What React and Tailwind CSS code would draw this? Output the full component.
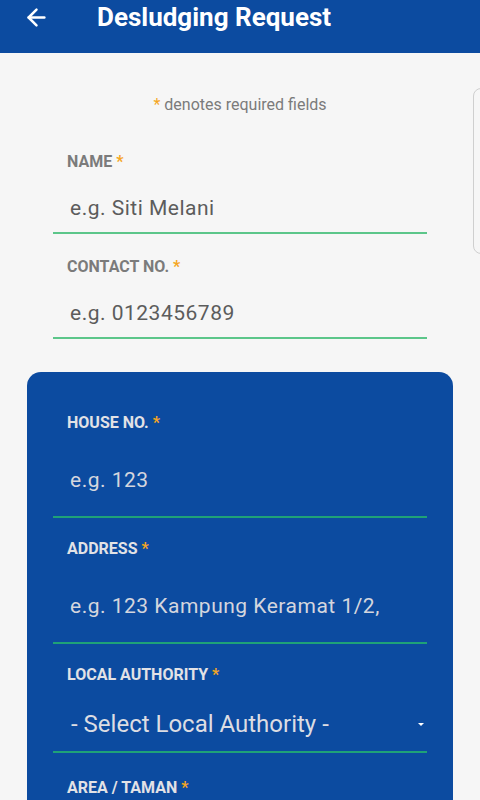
import React from 'react';
import {ArrowLeft} from 'lucide-react';

const Req = () => <span className="text-[#f5a623]">*</span>;

const LightField = ({label, placeholder}) => (
    <div className="mb-[23px]">
        <div className="pl-[14px] h-[20px] leading-[20px] text-[16px] font-bold text-[#7b7b7b]">
            {label} <Req/>
        </div>
        <div
            className="pl-[17px] pt-[22px] pb-[10px] leading-[28px] text-[21px] text-[#5c5c5c] tracking-[0.5px] border-b-2 border-[#5cc68a]">
            {placeholder}
        </div>
    </div>
);

const DarkField = ({label, placeholder}) => (
    <div className="mb-[21px]">
        <div className="pl-[14px] h-[20px] leading-[20px] text-[16px] font-bold text-[#e2e2e6]">
            {label} <Req/>
        </div>
        <div
            className="pl-[17px] pt-[33px] pb-[22px] leading-[28px] text-[21px] text-[#d4d6de] tracking-[0.5px] border-b-2 border-[#1fa277]">
            {placeholder}
        </div>
    </div>
);

const App = () => {
    return (
        <div className="relative h-[800px] w-[480px] overflow-hidden bg-[#f6f6f6] font-['Roboto',sans-serif]">
            {/* Header */}
            <header className="h-[53px] bg-[#0c4ba0] text-white">
                <div className="flex items-center h-[34px]">
                    <ArrowLeft size={27} strokeWidth={2.2} className="ml-[23px]"/>
                    <h1 className="ml-[47px] text-[26px] font-bold leading-none">Desludging Request</h1>
                </div>
            </header>

            {/* side card edge */}
            <div className="absolute left-[473px] top-[88px] w-[30px] h-[166px] rounded-lg border border-[#cfcfcf]"/>

            <p className="mt-[42px] h-[20px] leading-[20px] text-center text-[16px] text-[#7b7b7b]">
                <Req/> denotes required fields
            </p>

            <div className="flex flex-col mx-[27px] mt-[37px]">
                <div className="px-[26px]">
                    <LightField label="NAME" placeholder="e.g. Siti Melani"/>
                    <LightField label="CONTACT NO." placeholder="e.g. 0123456789"/>
                </div>

                {/* Address panel */}
                <div className="mt-[10px] rounded-[14px] bg-[#0c4ba0] px-[26px] pt-[41px] pb-[40px]">
                    <DarkField label="HOUSE NO." placeholder="e.g. 123"/>
                    <DarkField label="ADDRESS" placeholder="e.g. 123 Kampung Keramat 1/2,"/>

                    <div className="mb-[25px]">
                        <div className="pl-[14px] h-[20px] leading-[20px] text-[16px] font-bold text-[#e2e2e6]">
                            LOCAL AUTHORITY <Req/>
                        </div>
                        <div
                            className="flex items-center justify-between pl-[18px] pr-[3px] pt-[23px] pb-[11px] leading-[32px] text-[24px] text-[#dcdde3] border-b-2 border-[#1fa277]">
                            <span>- Select Local Authority -</span>
                            <span className="w-0 h-0 border-x-[3px] border-x-transparent border-t-[3px] border-t-white"/>
                        </div>
                    </div>

                    <div className="pl-[14px] h-[20px] leading-[20px] text-[16px] font-bold text-[#e2e2e6]">
                        AREA / TAMAN <Req/>
                    </div>
                </div>
            </div>
        </div>
    );
};

export default App;
